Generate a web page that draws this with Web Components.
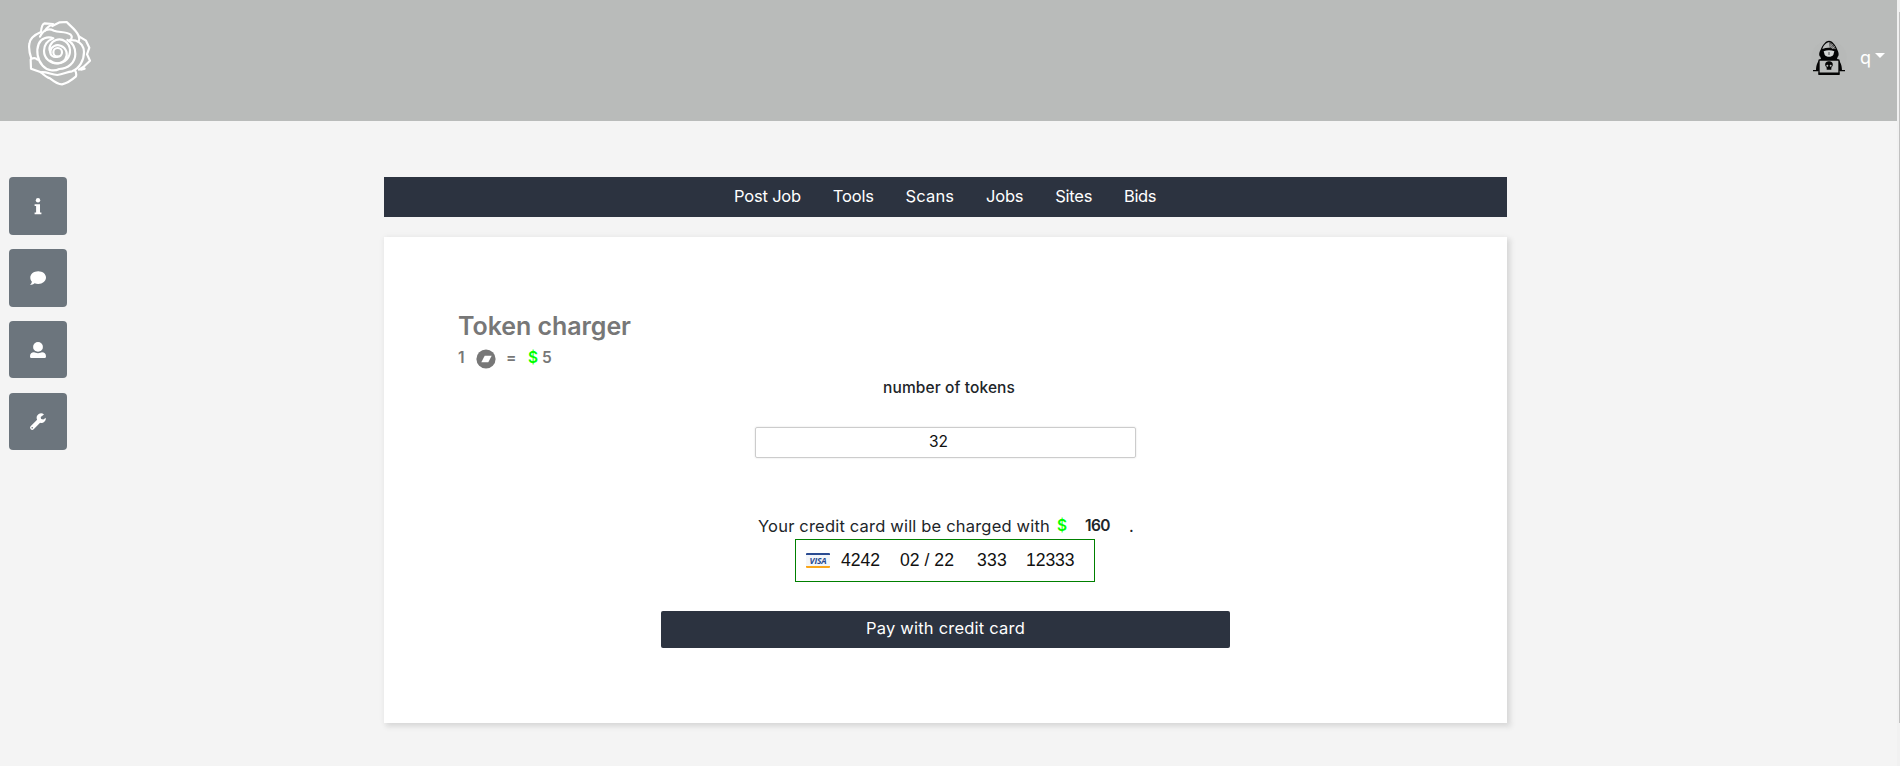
<!DOCTYPE html>
<html lang="en"><head><meta charset="utf-8"><title>Token charger</title>
<style>body{margin:0;background:#f4f4f4;font-family:Inter,"Open Sans",sans-serif;color:#212529;font-size:16.5px;overflow:hidden}</style></head>
<body><app-page></app-page>
<script>
const define=(name,html,setup)=>customElements.define(name,class extends HTMLElement{
  constructor(){super();const t=document.createElement('template');t.innerHTML=html;this.attachShadow({mode:'open'}).append(t.content.cloneNode(true));}
  connectedCallback(){if(setup)setup(this);}
});
// Tracks its text so that it fills the width given in "w".
define('fit-text','<style>:host{display:block;flex:none;white-space:nowrap;line-height:20px}span{display:inline-block}</style><span><slot></slot></span>',el=>{
  const w=+el.getAttribute('w'),s=el.shadowRoot.querySelector('span'),n=el.textContent.length;
  el.style.width=w+'px';
  s.style.letterSpacing=(w-s.getBoundingClientRect().width)/n+'px';
});
define('rose-logo',`<style>:host{display:block;width:64px;height:66px}svg{display:block}</style>
<svg width="64" height="66" viewBox="0 0 192 198" fill="none" stroke="#fff" stroke-width="6.5" stroke-linejoin="round" stroke-linecap="round">
<circle cx="89" cy="97" r="13"/>
<path d="M89 110C76 114 66 106 67 94C69 80 84 72 98 77C116 84 121 104 112 117C102 132 80 134 66 122"/>
<path d="M67 96C60 84 68 66 84 60C104 53 124 68 126 90C127 112 112 128 90 130C66 132 48 114 48 92C48 76 58 62 72 57"/>
<path d="M76 55C58 48 38 56 32 72C24 92 28 120 44 137C58 153 80 154 94 147C120 146 142 128 142 102C142 80 134 68 118 60"/>
<path d="M36 50C46 28 62 24 78 32C92 38 112 34 127 43C134 50 132 58 124 61"/>
<path d="M39 36C40 23 44 12 50 10L75 12C64 17 55 25 51 32M73 18L95 7L116 6C128 19 145 30 151 46C155 54 154 60 151 65"/>
<path d="M39 36C20 44 5 57 4 72C1 89 5 101 10 116C19 113 25 115 28 119M8 119L9 146L39 157C47 165 55 173 66 175C76 183 91 193 102 193C119 189 136 176 144 169C146 161 144 156 141 151"/>
<path d="M39 157C54 154 70 164 88 165C106 163 116 156 132 154C155 145 168 121 168 96C168 80 158 66 144 62L128 60M153 49L174 62L184 83L177 103L186 122L167 140L153 149M159 149L170 146"/></svg>`);
define('hacker-avatar',`<style>:host{display:block;width:36px;height:36px}svg{display:block}</style>
<svg width="36" height="36" viewBox="0 0 108 108"><circle cx="54" cy="54" r="53" fill="#b7b9b8"/>
<path d="M28 50C22 46 25 35 29 29C35 12 46 2 54 2S73 12 79 29C83 36 85 46 80 50L78 57C88 62 93 76 93 92H15C15 76 20 62 30 57Z" fill="#050505"/>
<path d="M34 27C38 14 48 7 54 7C62 9 71 19 74 27C61 22 46 22 34 27Z" fill="#bcbebd"/>
<path d="M54 6C64 9 71 18 75 28L56 24Z" fill="#555"/><path d="M56 12l14 14M58 19l8 7M65 12l-8 8M71 19l-6 6" stroke="#bbb" stroke-width="2"/>
<path d="M38 34C47 30 61 30 70 34L67 44C62 52 46 52 41 44Z" fill="#d5d7d6"/><path d="M54 36v9" stroke="#555" stroke-width="3"/>
<rect x="24" y="60" width="60" height="40" rx="2" fill="#bcbebd" stroke="#050505" stroke-width="4"/>
<path d="M6 92h16M86 92h16" stroke="#050505" stroke-width="4"/><path d="M22 98h64v7H22z" fill="#050505"/>
<path d="M43 77C41 67 48 64 54 64S67 67 65 77L61 83V89H47V83Z" fill="#050505"/><circle cx="49" cy="77" r="3" fill="#bcbebd"/><circle cx="59" cy="77" r="3" fill="#bcbebd"/></svg>`);
define('top-bar',`<style>:host{display:flex;box-sizing:border-box;width:1897px;height:121px;background:#b9bbba;padding:20px 12px 0 28px;justify-content:space-between}div{display:flex;height:36px;align-items:center;margin-top:20px;color:#fff}fit-text{margin:0 4px 0 13px;font-size:18px}i{border:5px solid transparent;border-top-color:#fff;border-bottom:0;margin-top:-5px}</style>
<rose-logo></rose-logo><div><hacker-avatar></hacker-avatar><fit-text w="11">q</fit-text><i></i></div>`);
const icons={
 info:'<path d="M5 6.2h5v8.2h1.4v1.900H4.600v-1.900h1.500V8.100H4.600V6.200z"/><circle cx="8" cy="2.300" r="2.200"/>',
 chat:'<path d="M8.200 1.200c4.500 0 7.800 2.800 7.800 6.400s-3.300 6.400-7.800 6.400c-1.300 0-2.500-.2-3.600-.7C3.400 14.300 1.800 15 0 15c1-.9 1.700-2.200 1.900-3.300C.8 10.600.3 9.200.3 7.600.3 4 3.700 1.200 8.200 1.200z"/>',
 user:'<circle cx="8" cy="4.900" r="4.900"/><path d="M0 14.500C0 11.600 1.700 10.300 4 10.300c1 .4 2.300.9 4 .9s3-.5 4-.9c2.300 0 4 1.300 4 4.200 0 .9-.5 1.500-1.300 1.500H1.300C.5 16 0 15.400 0 14.500z"/>',
 wrench:'<path fill-rule="evenodd" d="M15.800 3.700a4.500 4.500 0 0 1-5.700 5.100L3.700 15.300a2.200 2.200 0 0 1-3.100-3.100l6.500-6.400A4.500 4.500 0 0 1 14 .4L10.700 2.900l.4 2.200 2.200.4zM2.200 13a.8.8 0 1 0 0 1.600.8.8 0 0 0 0-1.600z"/>'};
define('side-button','<style>:host{display:flex;height:58px;border-radius:4px;background:#6c757d;align-items:center;justify-content:center}:host([short]){height:57px}svg{overflow:visible}</style><svg width="16" height="16" viewBox="0 0 16 16" fill="#fff"></svg>',el=>{el.shadowRoot.querySelector('svg').innerHTML=icons[el.getAttribute('icon')];});
define('side-bar','<style>:host{display:flex;flex-direction:column;width:58px;gap:14px}side-button:last-child{margin-top:1px}</style><side-button icon="info"></side-button><side-button icon="chat"></side-button><side-button short icon="user"></side-button><side-button short icon="wrench"></side-button>');
define('nav-bar','<style>:host{display:flex;box-sizing:border-box;height:40px;background:#2c3340;color:#fff;padding:9px 0 0 350px}fit-text{margin-right:31.8px}</style><fit-text w="67">Post Job</fit-text><fit-text w="41">Tools</fit-text><fit-text w="48.500">Scans</fit-text><fit-text w="37.500">Jobs</fit-text><fit-text w="37">Sites</fit-text><fit-text w="32">Bids</fit-text>');
define('card-field',`<style>:host{display:flex;box-sizing:border-box;width:300px;height:43px;border:1px solid #008000;margin:0 0 0 411px;padding:13px 0 0 10px;font:17.6px "Liberation Sans",Arial,sans-serif;color:#111}
.v{width:24px;height:15px;box-sizing:border-box;border-top:2.500px solid #2a4b91;border-bottom:2px solid #faa61a;background:#f3f6fa;border-radius:1px;color:#2a4b91;font:italic bold 8.500px/11px "Open Sans",sans-serif;text-align:center;letter-spacing:-.2px}fit-text{margin-top:-3px}</style>
<div class="v">VISA</div><fit-text w="39" style="margin-left:11px">4242</fit-text><fit-text w="54" style="margin-left:20px">02 / 22</fit-text><fit-text w="30" style="margin-left:23px">333</fit-text><fit-text w="48.500" style="margin-left:19px">12333</fit-text>`);
define('token-card',`<style>:host{display:block;box-sizing:border-box;height:486px;margin-top:20px;background:#fff;box-shadow:0 0 7px rgba(0,0,0,.045),3px 3px 5px 1px #dedede;padding-top:72px}
h2{margin:0 0 0 74px;font-size:25px;font-weight:600;color:#777;height:34px;display:flex;align-items:center}
.row{display:flex;align-items:center;height:20px}.rate{margin:6px 0 0 74px;color:#777;font-weight:600;font-size:15.500px}.g{color:#0f0}.b{font-weight:600}
.rate svg{margin:0 10px 0 11px;flex:none}.lab{margin:9px 0 0 499px;font-size:15.500px;font-weight:500}
.in{box-sizing:border-box;width:381px;height:31px;border:1px solid #ccc;border-radius:2px;margin:29px 0 0 371px;box-shadow:0 0 2px #ddd;padding:4px 0 0 173px;font-size:15.500px;color:#111}
.charge{margin:58px 0 3px 374px}.charge .b{font-size:15.5px}
.pay{box-sizing:border-box;width:569px;height:37px;border-radius:2px;background:#2c3340;color:#fff;margin:29px 0 0 277px;padding-bottom:3px;display:flex;align-items:center;justify-content:center}</style>
<h2><fit-text w="173">Token charger</fit-text></h2>
<div class="row rate"><fit-text w="7" style="margin-top:-2px">1</fit-text><svg width="20" height="20" viewBox="0 0 20 20"><circle cx="10" cy="10" r="9.600" fill="#777"/><path d="M8.700 6.800h7l-3.400 6.400h-7z" fill="#fff"/></svg><fit-text w="10" style="margin-top:-2px">=</fit-text><fit-text class="g" w="10" style="margin:-2px 0 0 12px">$</fit-text><fit-text w="10" style="margin:-2px 0 0 4px">5</fit-text></div>
<fit-text class="lab" w="132">number of tokens</fit-text>
<div class="in"><fit-text w="19">32</fit-text></div>
<div class="row charge"><fit-text w="292">Your credit card will be charged with</fit-text><fit-text class="g b" w="10" style="margin-left:7px">$</fit-text><fit-text class="b" w="25" style="margin-left:18px">160</fit-text><fit-text w="5" style="margin-left:19px">.</fit-text></div>
<card-field></card-field>
<div class="pay"><fit-text w="159">Pay with credit card</fit-text></div>`);
define('scroll-track','<style>:host{display:block;box-sizing:border-box;width:3px;height:766px;background:#f1f1f1;padding:12px 0 0 2px}div{height:711px;background:#c1c1c1}</style><div></div>');
define('app-page','<style>:host{display:flex;height:766px}.body{width:1897px}main{display:flex;padding:56px 0 0 9px}section{width:1123px;margin-left:317px}</style><div class="body"><top-bar></top-bar><main><side-bar></side-bar><section><nav-bar></nav-bar><token-card></token-card></section></main></div><scroll-track></scroll-track>');
</script></body></html>
